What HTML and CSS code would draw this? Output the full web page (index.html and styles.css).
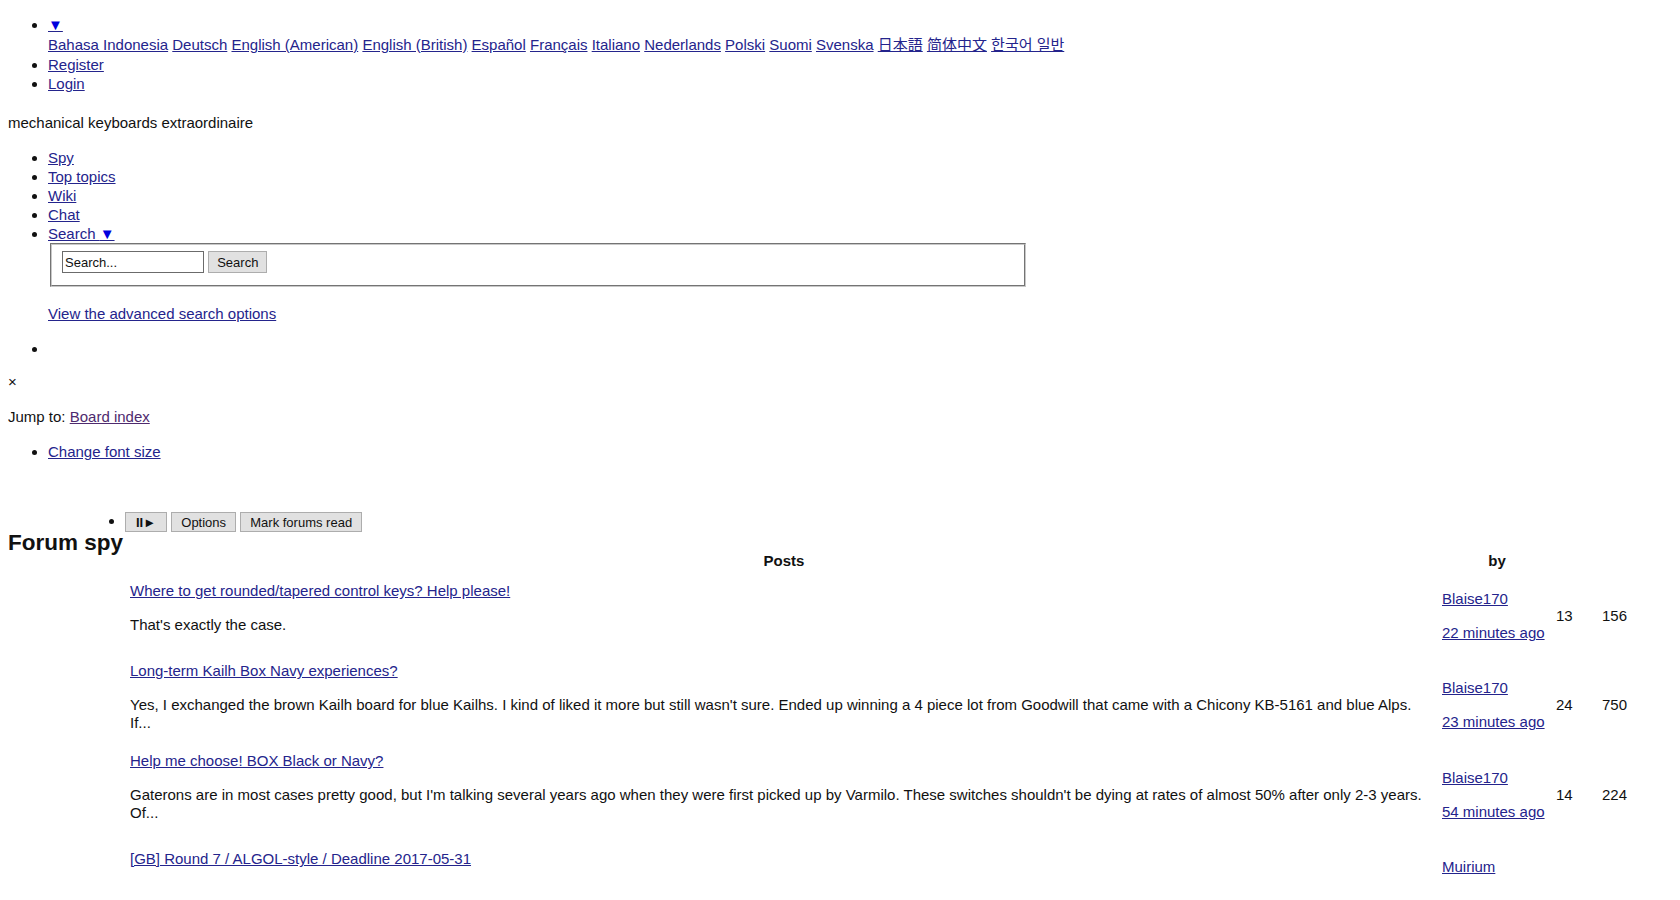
FILE: index.html
```html
<!DOCTYPE html>
<html lang="en">
  <head>
    <meta charset="UTF-8" />
    <title>Forum spy - Deskthority</title>
    <link rel="stylesheet" href="styles.css">
  </head>
  <body>
    <ul class="list top-links">
      <li>
        <a href="#" class="drop"><span class="arrow">▼</span></a>
        <div class="langs">
          <a href="#">Bahasa Indonesia</a> <a href="#">Deutsch</a> <a href="#">English (American)</a> <a href="#">English (British)</a> <a href="#">Español</a> <a href="#">Français</a> <a href="#">Italiano</a> <a href="#">Nederlands</a> <a href="#">Polski</a> <a href="#">Suomi</a> <a href="#">Svenska</a> <a href="#" class="cjk">日本語</a> <a href="#" class="cjk">简体中文</a> <a href="#" class="cjk">한국어 일반</a>
        </div>
      </li>
      <li><a href="#">Register</a></li>
      <li><a href="#">Login</a></li>
    </ul>

    <div class="tagline">mechanical keyboards extraordinaire</div>

    <ul class="list nav">
      <li><a href="#">Spy</a></li>
      <li><a href="#">Top topics</a></li>
      <li><a href="#">Wiki</a></li>
      <li><a href="#">Chat</a></li>
      <li>
        <a href="#">Search <span class="arrow">▼</span></a>
        <form action="#" method="get">
          <fieldset class="search-box">
            <input type="text" class="search-input" value="Search..." /> <button type="submit" class="btn">Search</button>
          </fieldset>
        </form>
        <p class="adv"><a href="#">View the advanced search options</a></p>
      </li>
      <li></li>
    </ul>

    <div class="close">×</div>

    <p class="jump">Jump to: <a href="#" class="visited">Board index</a></p>

    <ul class="list">
      <li><a href="#">Change font size</a></li>
    </ul>

    <ul class="spy-tools">
      <li>
        <button type="button" class="btn tool toggle">II►</button>
        <button type="button" class="btn tool">Options</button>
        <button type="button" class="btn tool">Mark forums read</button>
      </li>
    </ul>

    <h2 class="title">Forum spy</h2>

    <table class="spy">
      <thead>
        <tr>
          <th class="col-icon"></th>
          <th>Posts</th>
          <th class="col-by">by</th>
          <th class="col-replies"></th>
          <th class="col-views"></th>
        </tr>
      </thead>
      <tbody>
        <tr>
          <td></td>
          <td class="post">
            <div><a href="#">Where to get rounded/tapered control keys? Help please!</a></div>
            <p>That's exactly the case.</p>
          </td>
          <td>
            <p><a href="#">Blaise170</a></p>
            <p><a href="#">22 minutes ago</a></p>
          </td>
          <td>13</td>
          <td>156</td>
        </tr>
        <tr>
          <td></td>
          <td class="post">
            <div><a href="#">Long-term Kailh Box Navy experiences?</a></div>
            <p>Yes, I exchanged the brown Kailh board for blue Kailhs. I kind of liked it more but still wasn't sure. Ended up winning a 4 piece lot from Goodwill that came with a Chicony KB-5161 and blue Alps. If...</p>
          </td>
          <td>
            <p><a href="#">Blaise170</a></p>
            <p><a href="#">23 minutes ago</a></p>
          </td>
          <td>24</td>
          <td>750</td>
        </tr>
        <tr>
          <td></td>
          <td class="post">
            <div><a href="#">Help me choose! BOX Black or Navy?</a></div>
            <p>Gaterons are in most cases pretty good, but I'm talking several years ago when they were first picked up by Varmilo. These switches shouldn't be dying at rates of almost 50% after only 2-3 years. Of...</p>
          </td>
          <td>
            <p><a href="#">Blaise170</a></p>
            <p><a href="#">54 minutes ago</a></p>
          </td>
          <td>14</td>
          <td>224</td>
        </tr>
        <tr>
          <td></td>
          <td class="post">
            <div><a href="#">[GB] Round 7 / ALGOL-style / Deadline 2017-05-31</a></div>
            <p>&nbsp;</p>
          </td>
          <td>
            <p><a href="#">Muirium</a></p>
            <p>&nbsp;</p>
          </td>
          <td></td>
          <td></td>
        </tr>
      </tbody>
    </table>
  </body>
</html>
```

FILE: styles.css
```css
body {
  margin: 8px;
  background-color: #fff;
  color: #111;
  font-family: "Liberation Sans", Arial, sans-serif;
  font-size: 15px;
  line-height: 19px;
}

a {
  color: #24248c;
}

a.visited {
  color: #4e2a6e;
}

.arrow {
  color: #0000dd;
}

.cjk {
  font-family: "Liberation Sans", "Noto Sans CJK JP", "Noto Sans CJK KR", sans-serif;
}

.list {
  margin: 16px 0;
  padding-left: 40px;
}

.top-links {
  margin-top: 6px;
}

.drop {
  line-height: 21px;
}

.nav {
  margin-bottom: 14px;
}

.langs {
  display: block;
  line-height: 20px;
}

.tagline {
  margin: 20px 0 0;
}

.search-box {
  width: 976px;
  box-sizing: border-box;
  margin: 0 2px;
  padding: 6px 10px 12px;
  border: 2px groove #c8c8c8;
}

.search-input {
  width: 142px;
  height: 22px;
  box-sizing: border-box;
  margin: 0;
  padding: 1px 2px;
  border: 1px solid #6b6b6b;
  font: 13px "Liberation Sans", Arial, sans-serif;
  color: #111;
  vertical-align: middle;
}

.btn {
  height: 22px;
  margin: 0;
  padding: 0 8px;
  border: 1px solid #adadad;
  border-radius: 0;
  background-color: #e1e1e1;
  color: #111;
  font: 13px "Liberation Sans", Arial, sans-serif;
  vertical-align: middle;
}

.adv {
  margin: 17px 0 16px;
}

.jump {
  margin: 16px 0 15px;
}

.spy-tools {
  margin: 50px 0 0;
  padding-left: 117px;
}

.tool {
  height: 20px;
  padding: 0 9px;
}

.toggle {
  padding: 0 10px;
  font-weight: bold;
}

.title {
  margin: 5px 0 0;
  font-size: 22.5px;
  line-height: 12px;
}

.spy {
  width: 100%;
  border-spacing: 2px;
  font-size: 15px;
  line-height: 18px;
}

.spy th,
.spy td {
  padding: 1px;
  text-align: left;
  vertical-align: middle;
}

.spy th {
  text-align: center;
}

.spy td.post {
  padding-right: 13px;
}

.spy td div {
  margin: 0;
}

.spy td p {
  margin: 16px 0;
}

.col-icon {
  width: 115px;
}

.col-by {
  width: 110px;
}

.col-replies {
  width: 42px;
}

.col-views {
  width: 67px;
}
```
